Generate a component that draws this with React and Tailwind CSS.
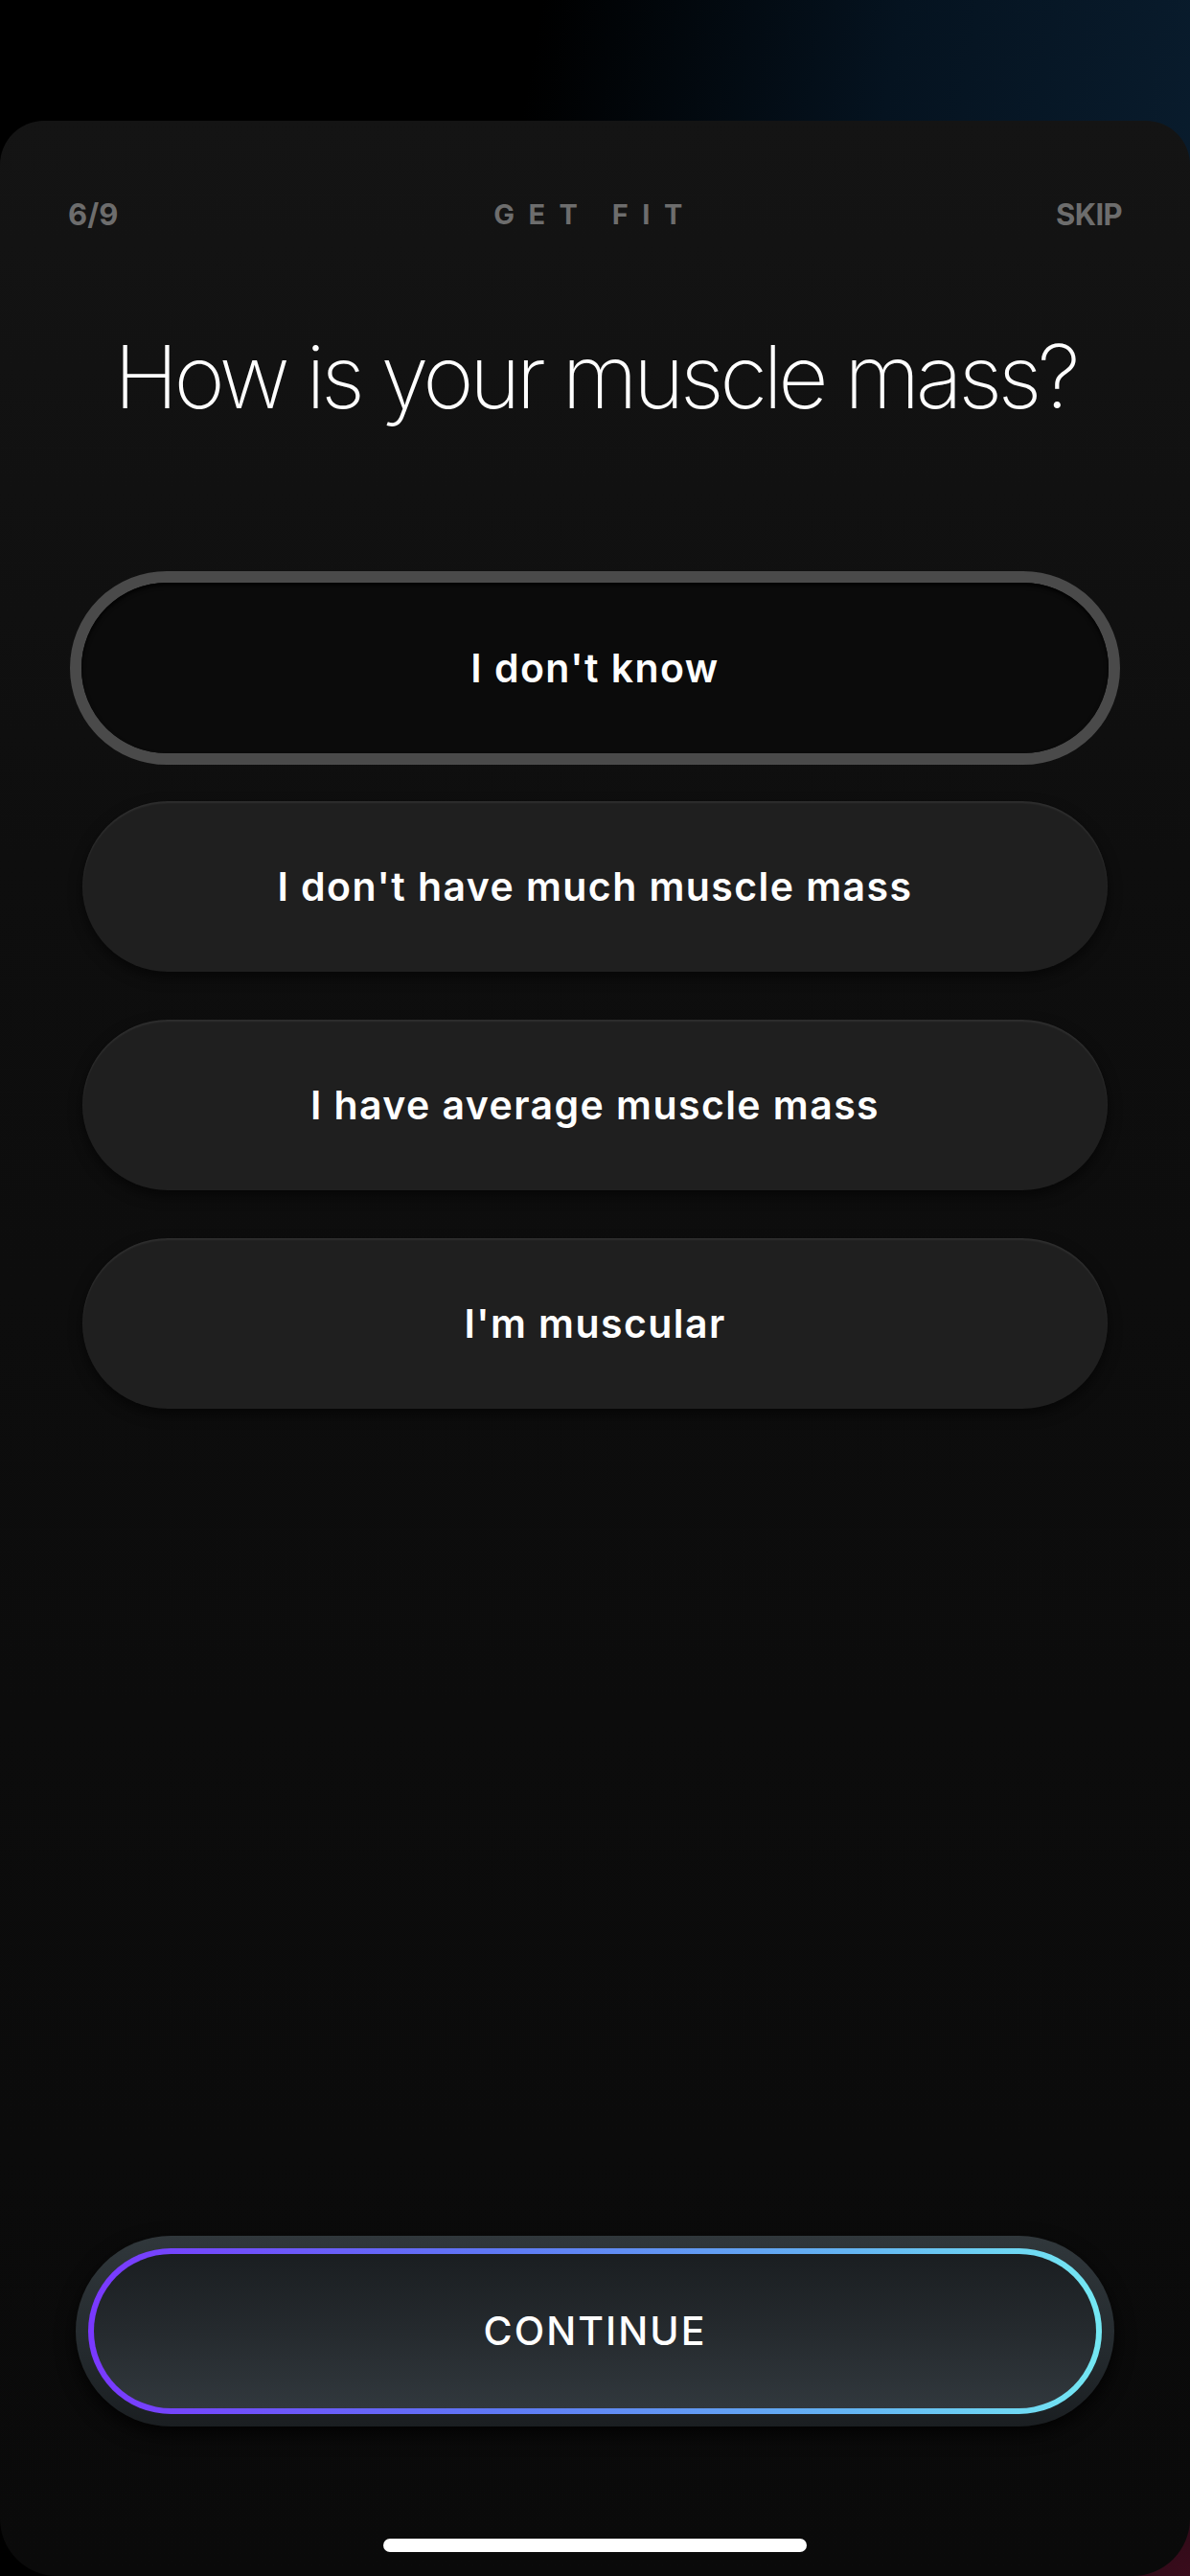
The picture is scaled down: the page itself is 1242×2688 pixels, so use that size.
import React from "react";

const options = [
  "I don't know",
  "I don't have much muscle mass",
  "I have average muscle mass",
  "I'm muscular",
];

function Option({ label }) {
  return (
    <div className="h-[178px] w-full rounded-full bg-[#1f1f1f] shadow-[inset_0_2px_2px_rgba(255,255,255,0.07),0_6px_14px_rgba(0,0,0,0.55)] flex items-center justify-center">
      <span className="text-[41px] font-semibold tracking-[0.035em] text-white leading-none">
        {label}
      </span>
    </div>
  );
}

export default function App() {
  return (
    <div
      className="relative w-[1242px] h-[2688px] overflow-hidden bg-[linear-gradient(100deg,#000000_33%,#051320_55%,#0a1e30_80%,#0b2034_100%)]"
      style={{ fontFamily: "Inter, 'Noto Sans', 'Liberation Sans', sans-serif" }}
    >
      <div className="absolute bottom-0 right-0 w-[300px] h-[200px] bg-[radial-gradient(circle_at_100%_100%,#3a0c1c_0%,#1a0710_50%,transparent_80%)]" />
      <div className="h-[126px]" />
      <div className="relative h-[2562px] rounded-t-[46px] rounded-b-[60px] bg-[linear-gradient(180deg,#141414_0%,#0e0e0e_30%,#0a0a0a_100%)] flex flex-col">
        {/* header */}
        <div className="mt-[78px] h-[38px] px-[71px] flex items-center justify-between leading-none">
          <span className="text-[31px] font-bold text-[#6d6d6d] w-[120px]">6/9</span>
          <span className="text-[29px] font-bold text-[#6d6d6d] tracking-[0.5em]">
            GET FIT
          </span>
          <span className="text-[31px] font-bold text-[#6d6d6d] w-[120px] text-right tracking-[-0.02em]">
            SKIP
          </span>
        </div>

        {/* title */}
        <h1 className="mt-[106px] text-center text-[91px] leading-none font-extralight tracking-[-0.05em] text-white">
          How is your muscle mass?
        </h1>

        {/* options */}
        <div className="mt-[157px] flex flex-col">
          <div className="mx-[73px] rounded-full border-[12px] border-[#4a4a4a]">
            <div className="h-[178px] rounded-full bg-[#0b0b0b] shadow-[inset_0_3px_4px_rgba(0,0,0,0.8)] flex items-center justify-center">
              <span className="text-[41px] font-semibold tracking-[0.035em] text-white leading-none">
                {options[0]}
              </span>
            </div>
          </div>
          <div className="mx-[86px] mt-[38px] flex flex-col gap-[50px]">
            {options.slice(1).map((o) => (
              <Option key={o} label={o} />
            ))}
          </div>
        </div>

        {/* continue */}
        <div className="mt-auto mx-[79px] h-[199px] rounded-full p-[13px] bg-[linear-gradient(180deg,#30373b_0%,#242a2e_60%,#1a1e21_100%)] shadow-[0_8px_20px_rgba(0,0,0,0.8)]">
          <div className="h-full rounded-full p-[6px] bg-[linear-gradient(90deg,#7a38ff_0%,#5f78f5_40%,#64b4f2_75%,#74e8f3_100%)]">
            <div className="h-full rounded-full bg-[linear-gradient(180deg,#1a1e21_0%,#252a2e_50%,#31383d_100%)] flex items-center justify-center">
              <span className="text-[41px] font-medium tracking-[0.05em] text-white leading-none">
                CONTINUE
              </span>
            </div>
          </div>
        </div>

        {/* home indicator */}
        <div className="mt-[117px] mb-[25px] flex justify-center">
          <div className="w-[442px] h-[14px] rounded-full bg-white" />
        </div>
      </div>
    </div>
  );
}
